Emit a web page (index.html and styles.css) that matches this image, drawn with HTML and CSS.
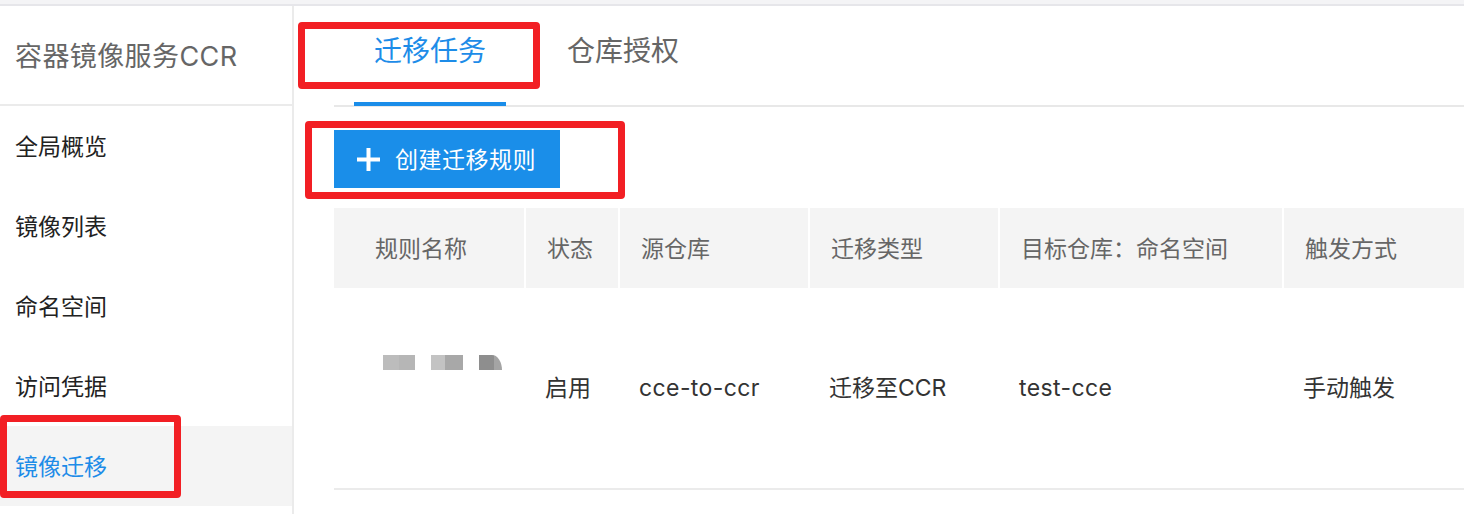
FILE: index.html
```html
<!DOCTYPE html>
<html lang="zh-CN">
<head>
<meta charset="utf-8">
<title>镜像迁移</title>
<link rel="stylesheet" href="styles.css">
</head>
<body>
<div class="page">
  <div class="topbar"></div>
  <div class="layout">
    <aside class="sidebar">
      <div class="sidebar-title">容器镜像服务CCR</div>
      <nav class="menu">
        <div class="menu-item">全局概览</div>
        <div class="menu-item">镜像列表</div>
        <div class="menu-item">命名空间</div>
        <div class="menu-item">访问凭据</div>
        <div class="menu-item active">镜像迁移</div>
      </nav>
    </aside>
    <main class="main">
      <div class="tabs">
        <div class="tab active">迁移任务</div>
        <div class="tab">仓库授权</div>
      </div>
      <div class="toolbar">
        <button class="btn-primary" type="button">
          <svg class="plus" width="23" height="23" viewBox="0 0 23 23" aria-hidden="true">
            <rect x="9.5" y="0" width="4" height="23" fill="#fff"/>
            <rect x="0" y="9.5" width="23" height="4" fill="#fff"/>
          </svg>
          <span>创建迁移规则</span>
        </button>
      </div>
      <div class="table">
        <div class="row head">
          <div class="cell first">规则名称</div>
          <div class="cell">状态</div>
          <div class="cell">源仓库</div>
          <div class="cell">迁移类型</div>
          <div class="cell">目标仓库：命名空间</div>
          <div class="cell">触发方式</div>
        </div>
        <div class="row body">
          <div class="cell first name">
            <div class="mosaic">
              <span class="blk b1"></span>
              <span class="blk b2"></span>
              <span class="blk b3"></span>
            </div>
          </div>
          <div class="cell">启用</div>
          <div class="cell latin">cce-to-ccr</div>
          <div class="cell">迁移至CCR</div>
          <div class="cell latin">test-cce</div>
          <div class="cell">手动触发</div>
        </div>
      </div>
    </main>
  </div>
  <div class="mark mark-tab"></div>
  <div class="mark mark-btn"></div>
  <div class="mark mark-menu"></div>
</div>
</body>
</html>
```
FILE: styles.css
```css
* { box-sizing: border-box; }
html, body { margin: 0; padding: 0; }
body {
  width: 1464px;
  height: 514px;
  overflow: hidden;
  background: #fff;
  font-family: "Inter", "Noto Sans CJK SC", sans-serif;
  color: #222;
}
.page { position: relative; width: 1464px; height: 514px; overflow: hidden; }
.topbar {
  height: 6px;
  background: #f4f4f6;
  border-bottom: 2px solid #e6e6ea;
}
.layout { display: flex; height: 508px; }
.sidebar {
  flex: none;
  width: 294px;
  border-right: 2px solid #ebebeb;
}
.sidebar-title {
  height: 100px;
  border-bottom: 2px solid #ebebeb;
  display: flex;
  align-items: center;
  padding-left: 15px;
  padding-bottom: 1px;
  font-size: 27px;
  letter-spacing: 0.4px;
  color: #666;
}
.menu { display: flex; flex-direction: column; }
.menu-item {
  height: 80px;
  display: flex;
  align-items: center;
  padding-left: 15px;
  padding-bottom: 3px;
  font-size: 23px;
  color: #222;
}
.menu-item.active { background: #f4f4f4; color: #1d8ce8; }

.main { flex: 1; min-width: 0; padding-left: 40px; overflow: hidden; }
.tabs {
  display: flex;
  gap: 41px;
  height: 101px;
  padding-left: 20px;
  border-bottom: 2px solid #e8e8e8;
}
.tab {
  height: 100px;
  padding: 25px 20px 0;
  line-height: 40px;
  font-size: 28px;
  color: #666;
  border-bottom: 4px solid transparent;
}
.tab.active { color: #1d8ce8; border-bottom-color: #1a8de9; }

.toolbar { padding-top: 23px; }
.btn-primary {
  display: flex;
  align-items: center;
  gap: 15px;
  width: 226px;
  height: 58px;
  padding: 0 0 2px 23px;
  border: 0;
  background: #1a8ee9;
  color: #fff;
  font-family: inherit;
  font-size: 23px;
  letter-spacing: 0.5px;
}
.plus { flex: none; margin-top: 2px; }

.table { margin-top: 20px; width: 1180px; }
.row {
  display: grid;
  grid-template-columns: 190px 92px 188px 188px 282px 228px;
  column-gap: 2px;
}
.head .cell {
  height: 80px;
  background: #f4f4f4;
  display: flex;
  align-items: center;
  padding-left: 21px;
  padding-bottom: 3px;
  font-size: 23px;
  color: #666;
}
.head .cell.first { padding-left: 41px; }
.body { height: 202px; border-bottom: 2px solid #ebebeb; }
.body .cell {
  display: flex;
  align-items: center;
  padding-left: 19px;
  padding-bottom: 4px;
  font-size: 23px;
  color: #333;
}
.body .cell.latin { padding-bottom: 1px; letter-spacing: 0.4px; }
.body .cell.name { align-items: flex-start; padding-top: 67px; padding-left: 49px; }
.mosaic { display: flex; gap: 16px; height: 15px; }
.blk { display: block; height: 15px; }
.b1 { width: 32px; background: linear-gradient(90deg, #bcbcbc 0 50%, #b6b6b6 50% 100%); }
.b2 { width: 32px; background: linear-gradient(90deg, #c3c3c3 0 45%, #a8a8a8 45% 100%); }
.b3 { width: 23px; background: linear-gradient(90deg, #8e8e8e 0 65%, #a4a4a4 65% 100%); border-top-right-radius: 10px 15px; }

.mark {
  position: absolute;
  border: 7px solid #f21f24;
  border-radius: 4px;
  pointer-events: none;
}
.mark-tab { left: 298px; top: 22px; width: 242px; height: 67px; }
.mark-btn { left: 305px; top: 121px; width: 320px; height: 78px; }
.mark-menu { left: 0; top: 415px; width: 181px; height: 83px; }
```
